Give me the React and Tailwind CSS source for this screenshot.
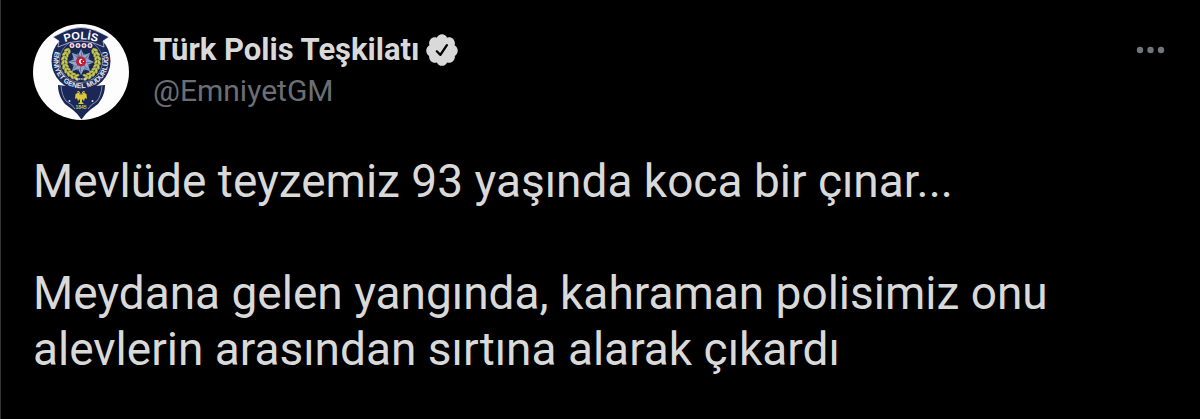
const POINTS = [0, 45, 90, 135, 180, 225, 270, 315];
const LEAVES = [-38, -24, -10, 4, 18, 32, 46, 60, 74];

function Crest() {
  return (
    <svg viewBox="0 0 96 96" className="size-24 shrink-0 rounded-full bg-[#fdfdfd]" role="img" aria-label="Polis arması">
      <defs>
        <path id="crest-top" d="M28 19.500 Q48 11 68 19.500" />
        <path id="crest-ring" d="M31 15.500 A27.300 27.300 0 1 0 65 15.500" />
      </defs>
      <path d="M25 61 L34 62 H62 L72 61 C72 69 69 75 65 80 Q61 83 57 86 Q52 90 48.500 95.500 Q45 90 40 86 Q36 83 32 80 C28 75 25 69 25 61Z" fill="#1a2757" />
      <path d="M28 62 Q29 72 33 77 Q40 81 42 85 M69 62 Q68 72 64 77 Q57 81 55 85" stroke="#c9d1e8" strokeWidth="0.600" fill="none" />
      <circle cx="48" cy="37" r="29.500" fill="#1c2a5a" />
      <circle cx="48" cy="37" r="21.500" fill="#1a2652" stroke="#8792ba" strokeWidth="0.700" />
      <path d="M28 9 Q48 -2 68 9 L76 13 L70 17 L71 23 Q48 11 25 23 L26 17 L20 13Z" fill="#1a2757" stroke="#f5f7ff" strokeWidth="0.600" />
      <text fill="#fff" className="font-['Liberation_Sans'] text-[11px] font-bold">
        <textPath href="#crest-top" startOffset="50%" textAnchor="middle">POLİS</textPath>
      </text>
      <text fill="#e4e8f4" className="font-['Liberation_Sans'] text-[7px] font-bold">
        <textPath href="#crest-ring" startOffset="50%" textAnchor="middle">EMNİYET GENEL MÜDÜRLÜĞÜ</textPath>
      </text>
      {LEAVES.map((a) => (
        <g key={a} fill="#c9c955" stroke="#5b672f" strokeWidth="0.300">
          <ellipse cx="66" cy="37" rx="1.500" ry="3" transform={`rotate(${a} 48 37) rotate(-28 66 37)`} />
          <ellipse cx="63" cy="37" rx="1.300" ry="2.600" transform={`rotate(${a} 48 37) rotate(28 63 37)`} />
          <ellipse cx="30" cy="37" rx="1.500" ry="3" transform={`rotate(${-a} 48 37) rotate(28 30 37)`} />
          <ellipse cx="33" cy="37" rx="1.300" ry="2.600" transform={`rotate(${-a} 48 37) rotate(-28 33 37)`} />
        </g>
      ))}
      {[39, 45, 51, 57].map((x) => (
        <g key={x}>
          <circle cx={x} cy="21.500" r="2.500" fill="#eee4ea" />
          <circle cx={x} cy="21.500" r="1.200" fill="#a34d68" />
        </g>
      ))}
      {POINTS.map((a) => (
        <g key={a} transform={`rotate(${a} 48 38)`}>
          <path d="M48 25 L52 33 L48 38 L44 33Z" fill="#93a5c9" />
          <path d="M48 25 L49.500 33 L48 38Z" fill="#5871a3" />
          <path d="M48 28 L50 34 L48 38 L46 34Z" fill="#596f9f" transform="rotate(22.500 48 38)" />
        </g>
      ))}
      <circle cx="48" cy="37.500" r="5" fill="#c51c35" />
      <path d="M49.800 35.200 A2.600 2.600 0 1 0 49.800 39.600 A2.100 2.100 0 1 1 49.800 35.200Z" fill="#fff" />
      <circle cx="50.500" cy="37.400" r="0.700" fill="#fff" />
      <path d="M43 55 H53" stroke="#d9dce6" strokeWidth="1.500" strokeDasharray="1 .6" />
      <path d="M47 71 L45.500 68.500 L42.500 70 L42 75 L44 74 L45 77 L47 75 L47 78 L45 80 H51 L49 78 L49 75 L51 77 L52 74 L54 75 L53.500 70 L50.500 68.500 L49 71 L48 69.500Z" fill="#dcc83b" />
      <path d="M44 68 L46 67.500 L47 70 M52 68 L50 67.500 L49 70" stroke="#dcc83b" strokeWidth="1" fill="none" />
      <circle cx="36.500" cy="77" r="1" fill="#d7def3" />
      <circle cx="59.500" cy="77" r="1" fill="#d7def3" />
      <text x="48" y="85" textAnchor="middle" fill="#d6c95c" className="font-['Liberation_Sans'] text-[5px] font-bold">1845</text>
    </svg>
  );
}

function VerifiedBadge() {
  return (
    <svg viewBox="0 0 24 24" className="size-9 shrink-0 fill-[#d9d9d9]" role="img" aria-label="Onaylanmış hesap">
      <path d="M22.500 12.500c0-1.580-.875-2.950-2.148-3.600.154-.435.238-.905.238-1.400 0-2.210-1.710-3.998-3.818-3.998-.47 0-.92.084-1.336.25C14.818 2.415 13.510 1.500 12 1.500s-2.816.917-3.437 2.250c-.415-.165-.866-.25-1.336-.25-2.110 0-3.818 1.790-3.818 4 0 .494.083.964.237 1.400-1.272.65-2.147 2.018-2.147 3.600 0 1.495.782 2.798 1.942 3.486-.02.170-.032.340-.032.514 0 2.210 1.708 4 3.818 4 .47 0 .92-.086 1.335-.25.620 1.334 1.926 2.250 3.437 2.250 1.512 0 2.818-.916 3.437-2.250.415.163.865.248 1.336.248 2.110 0 3.818-1.790 3.818-4 0-.174-.012-.344-.033-.513 1.158-.687 1.943-1.990 1.943-3.484zm-6.616-3.334l-4.334 6.500c-.145.217-.382.334-.625.334-.143 0-.288-.04-.416-.126l-.115-.094-2.415-2.415c-.293-.293-.293-.768 0-1.060s.768-.294 1.060 0l1.770 1.767 3.825-5.740c.23-.345.696-.436 1.040-.207.346.230.440.696.210 1.040z" />
    </svg>
  );
}

export default function App() {
  return (
    <article className="min-h-screen border-l border-[#2f3336] bg-black px-8 pt-6 pb-10 font-['Roboto','Liberation_Sans',sans-serif] text-[#d9d9d9]">
      <header className="flex items-start gap-6">
        <Crest />
        <div className="min-w-0 flex-1 pt-2">
          <div className="flex items-center gap-1">
            <h1 className="text-[31px] leading-9 font-bold">Türk Polis Teşkilatı</h1>
            <VerifiedBadge />
          </div>
          <a href="#profile" className="block text-[30px] leading-[46px] text-[#6b6f74]">@EmniyetGM</a>
        </div>
        <button type="button" aria-label="Daha fazla" className="mt-2 flex h-9 items-center">
          <svg viewBox="0 0 36 36" className="size-9 fill-[#71767b]">
            <circle cx="8" cy="18" r="3.200" />
            <circle cx="18.500" cy="18" r="3.200" />
            <circle cx="29" cy="18" r="3.200" />
          </svg>
        </button>
      </header>
      <div className="mt-[33px] max-w-[1060px] text-[46px] leading-14">
        <p>Mevlüde teyzemiz 93 yaşında koca bir çınar...</p>
        <p className="mt-14">Meydana gelen yangında, kahraman polisimiz onu alevlerin arasından sırtına alarak çıkardı</p>
      </div>
    </article>
  );
}
